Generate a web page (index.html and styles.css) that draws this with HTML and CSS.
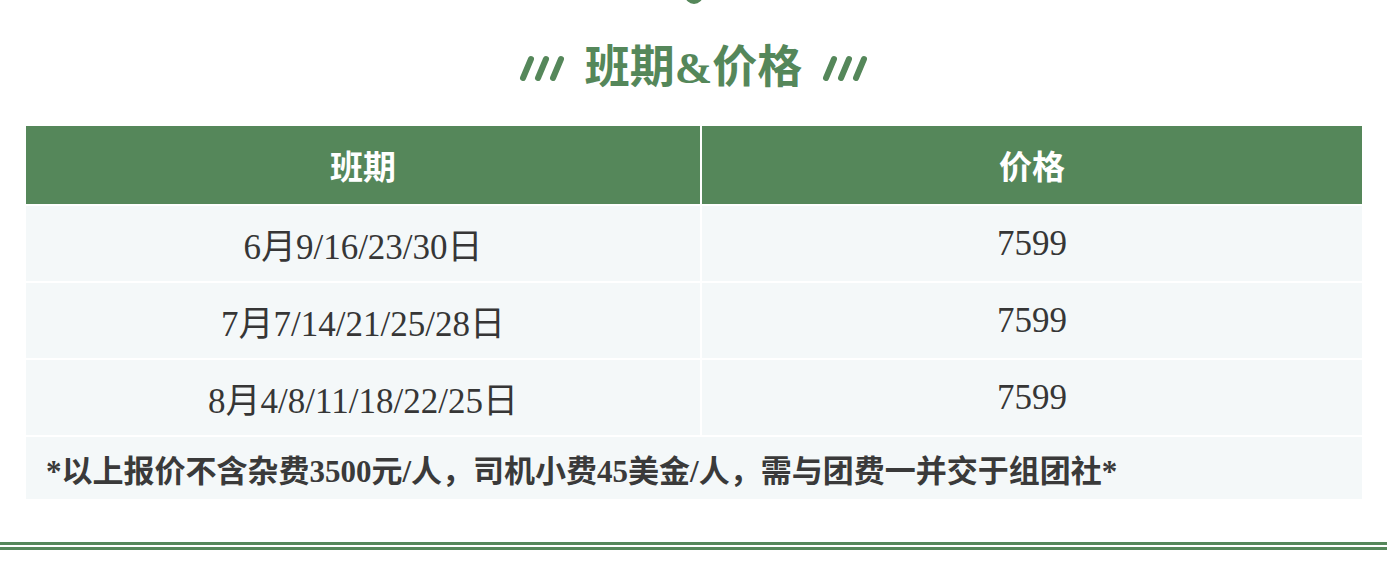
FILE: index.html
```html
<!DOCTYPE html>
<html lang="zh">
<head>
<meta charset="utf-8">
<title>班期&amp;价格</title>
<link rel="stylesheet" href="styles.css">
</head>
<body>
<div class="page">
  <div class="dot"></div>
  <div class="title-row">
    <svg class="slashes" viewBox="0 0 46 28" width="46" height="28" aria-hidden="true">
      <line x1="4" y1="24" x2="12" y2="5"/>
      <line x1="19" y1="24" x2="27" y2="5"/>
      <line x1="34" y1="24" x2="42" y2="5"/>
    </svg>
    <h1 class="title">班期&amp;价格</h1>
    <svg class="slashes" viewBox="0 0 46 28" width="46" height="28" aria-hidden="true">
      <line x1="4" y1="24" x2="12" y2="5"/>
      <line x1="19" y1="24" x2="27" y2="5"/>
      <line x1="34" y1="24" x2="42" y2="5"/>
    </svg>
  </div>
  <div class="table">
    <div class="cell head">班期</div>
    <div class="cell head">价格</div>
    <div class="cell">6月9/16/23/30日</div>
    <div class="cell">7599</div>
    <div class="cell">7月7/14/21/25/28日</div>
    <div class="cell">7599</div>
    <div class="cell">8月4/8/11/18/22/25日</div>
    <div class="cell">7599</div>
    <div class="cell note">*以上报价不含杂费3500元/人，司机小费45美金/人，需与团费一并交于组团社*</div>
  </div>
  <div class="double-rule"></div>
</div>
</body>
</html>
```
FILE: styles.css
```css
html, body {
  margin: 0;
  padding: 0;
  background: #ffffff;
}
body {
  font-family: "Liberation Serif", "Noto Sans CJK SC", serif;
  color: #333333;
  overflow: hidden;
}
.page {
  width: 1387px;
  height: 561px;
  overflow: hidden;
}
.dot {
  width: 18px;
  height: 18px;
  border-radius: 50%;
  background: #55875a;
  margin: -14px auto 0;
}
.title-row {
  display: flex;
  justify-content: center;
  align-items: center;
  gap: 20px;
  margin-top: 42px;
  height: 44px;
  margin-bottom: 36px;
}
.slashes line {
  stroke: #55875a;
  stroke-width: 6;
  stroke-linecap: round;
}
.title {
  margin: 0;
  font-size: 45px;
  line-height: 44px;
  font-weight: 700;
  color: #55875a;
  font-family: "Liberation Serif", "Noto Sans CJK SC", serif;
}
.table {
  display: grid;
  grid-template-columns: 674px 660px;
  grid-template-rows: 78px 75px 75px 75px 62px;
  gap: 2px;
  margin: 0 25px 0 26px;
}
.cell {
  background: #f4f8f9;
  display: flex;
  align-items: center;
  justify-content: center;
  font-size: 35px;
  color: #363636;
}
.cell.head {
  background: #55875a;
  color: #ffffff;
  font-family: "Noto Sans CJK SC", sans-serif;
  font-weight: 700;
  font-size: 33px;
}
.cell.note {
  grid-column: 1 / span 2;
  justify-content: flex-start;
  padding-left: 20px;
  font-size: 31px;
  font-weight: 700;
  color: #3a3a3a;
}
.double-rule {
  margin-top: 43px;
  height: 2px;
  border-top: 3px solid #55875a;
  border-bottom: 3px solid #55875a;
}
```
